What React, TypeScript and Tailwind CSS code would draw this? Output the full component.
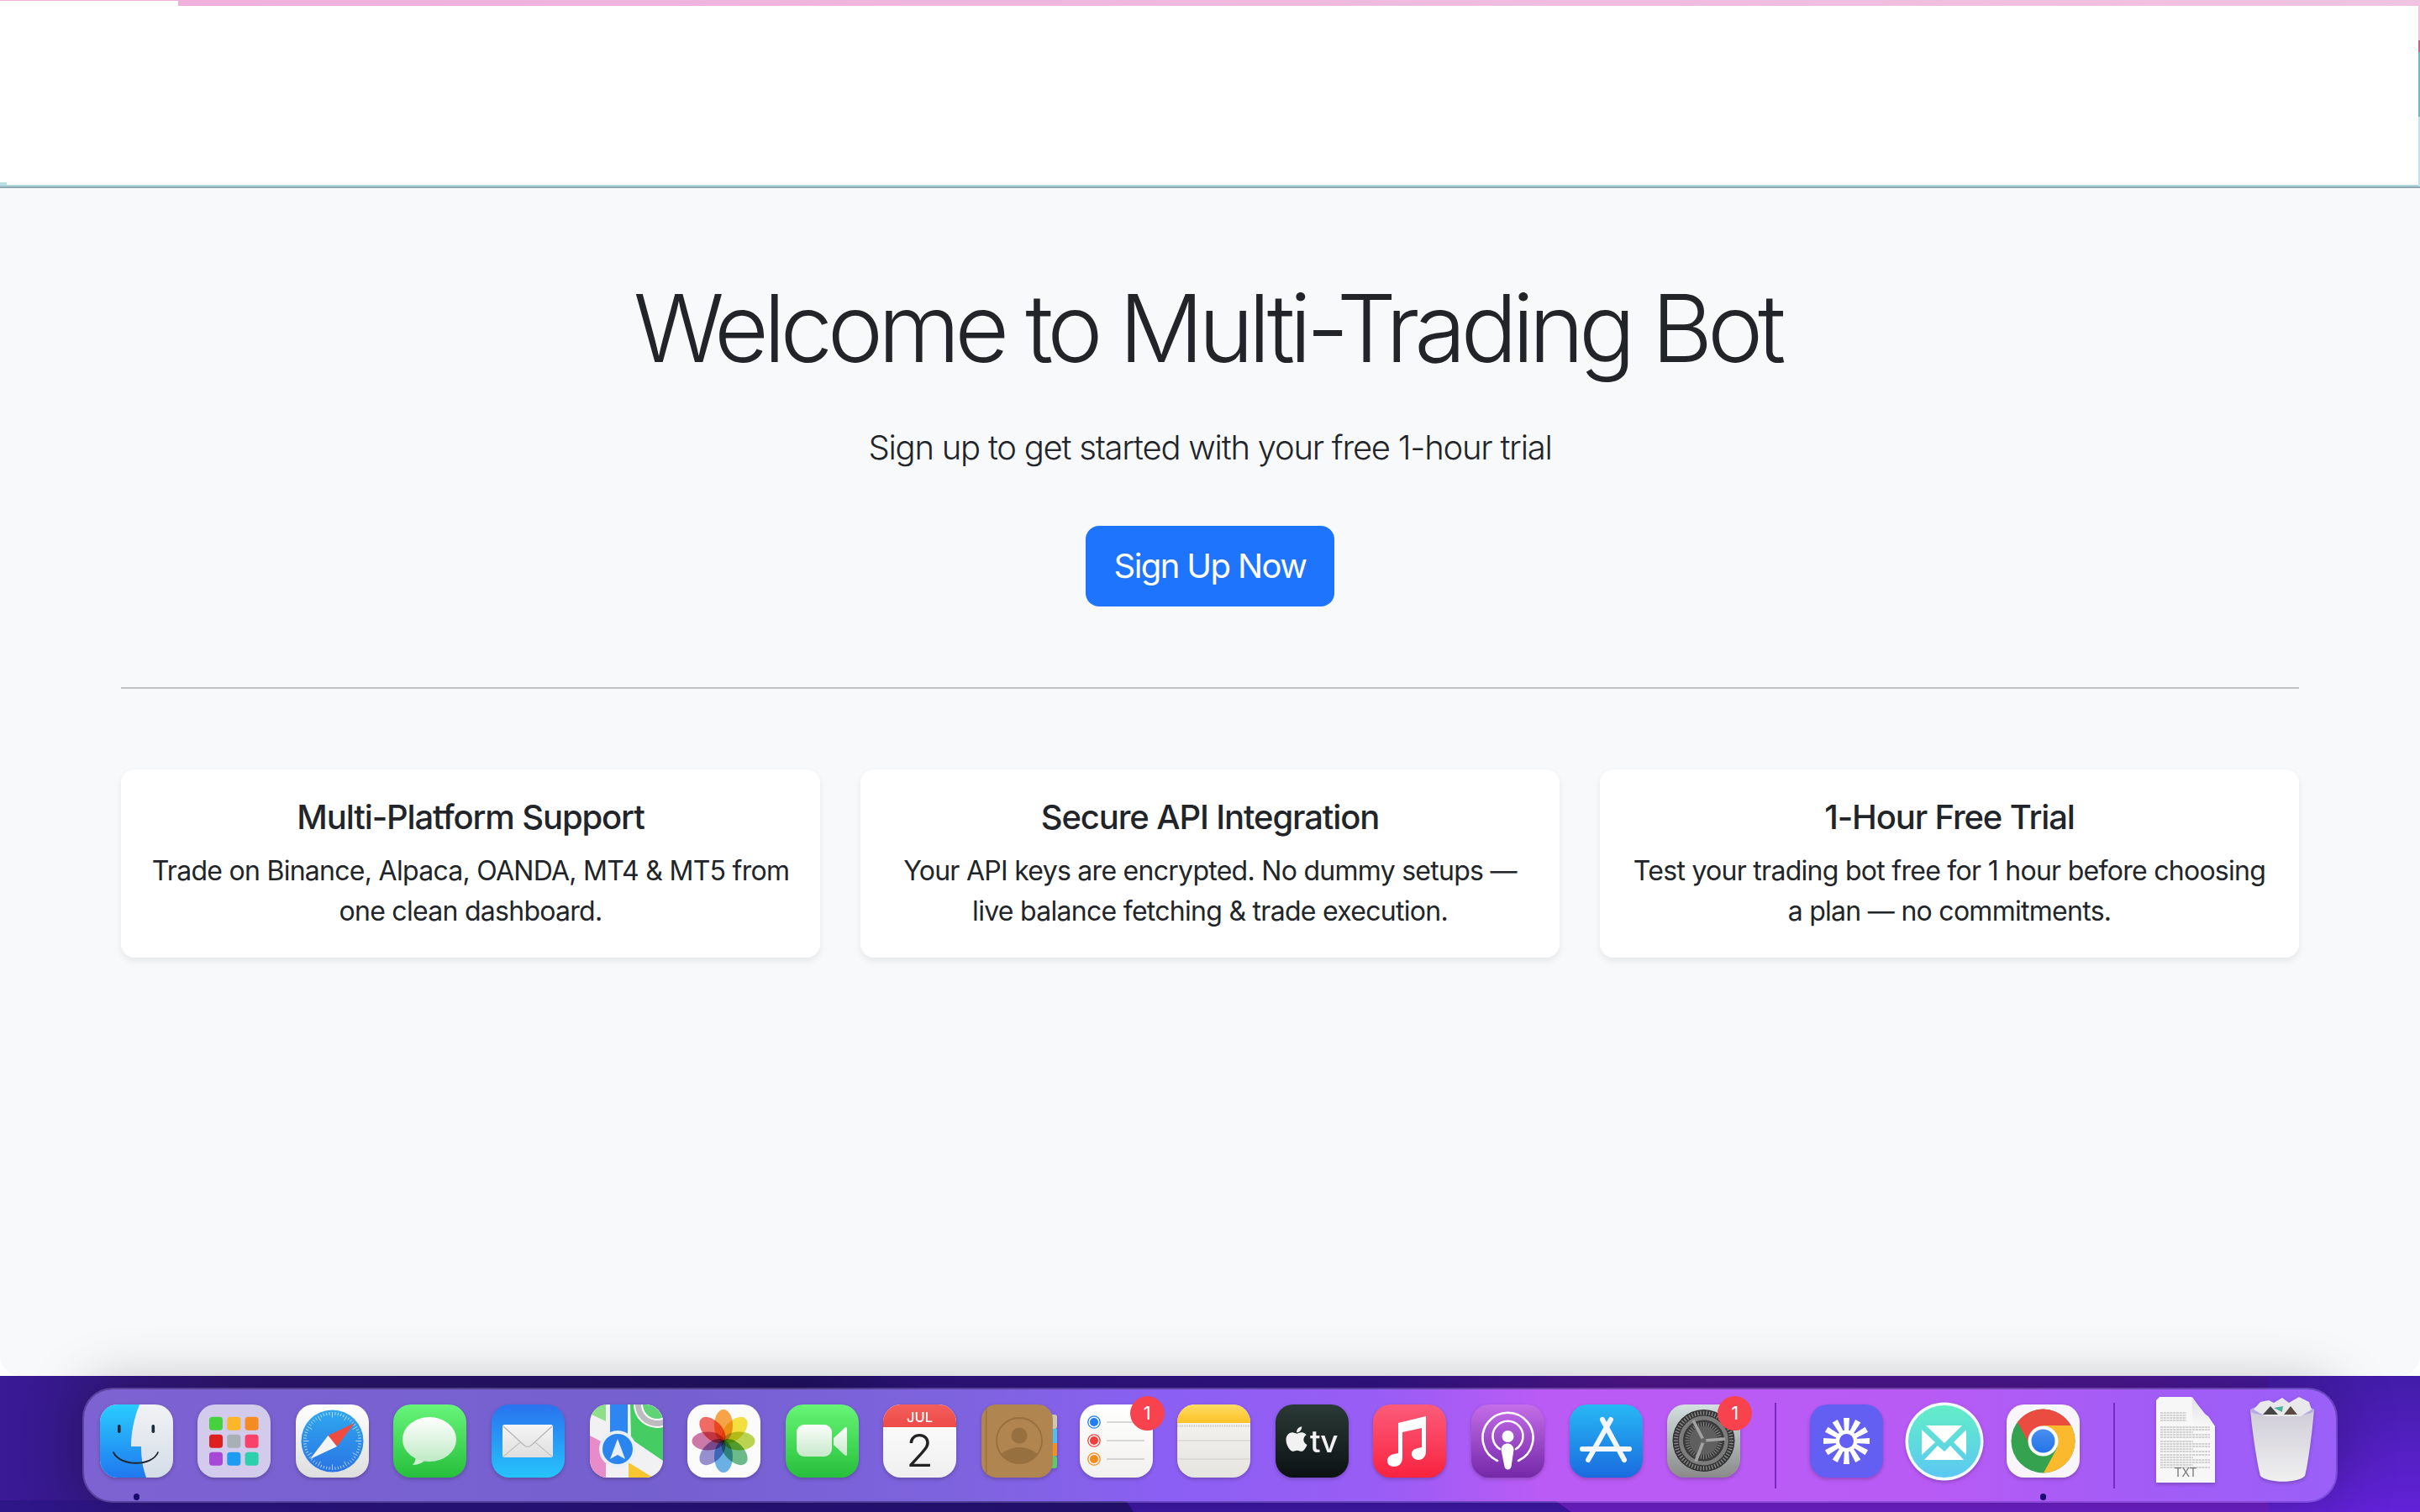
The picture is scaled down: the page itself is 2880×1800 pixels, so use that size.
import React from 'react';
import { FaApple } from 'react-icons/fa';

const features = [
  {
    title: 'Multi-Platform Support',
    text: 'Trade on Binance, Alpaca, OANDA, MT4 & MT5 from one clean dashboard.',
  },
  {
    title: 'Secure API Integration',
    text: 'Your API keys are encrypted. No dummy setups — live balance fetching & trade execution.',
  },
  {
    title: '1-Hour Free Trial',
    text: 'Test your trading bot free for 1 hour before choosing a plan — no commitments.',
  },
];

const iconShadow = 'block overflow-visible drop-shadow-[0_2px_2px_rgba(0,0,0,0.22)]';

function Tile({ id, children }: { id: string; children: React.ReactNode }) {
  return (
    <svg viewBox="0 0 87 87" className={`w-[87px] h-[87px] ${iconShadow}`}>
      <defs>
        <clipPath id={id}>
          <rect width="87" height="87" rx="21" />
        </clipPath>
      </defs>
      <g clipPath={`url(#${id})`}>{children}</g>
    </svg>
  );
}

function VGrad({ id, from, to }: { id: string; from: string; to: string }) {
  return (
    <defs>
      <linearGradient id={id} x1="0" y1="0" x2="0" y2="1">
        <stop offset="0" stopColor={from} />
        <stop offset="1" stopColor={to} />
      </linearGradient>
    </defs>
  );
}

function Finder() {
  return (
    <Tile id="finder">
      <VGrad id="finderL" from="#2accfe" to="#1f78ef" />
      <VGrad id="finderR" from="#f1f2f4" to="#d4dde8" />
      <rect width="87" height="87" fill="url(#finderR)" />
      <path d="M0 0H47C41 15 37 32 37 50H49C49 64 51 76 55 87H0Z" fill="url(#finderL)" />
      <rect x="21" y="24" width="3.6" height="10" rx="1.8" fill="#1c2a3a" />
      <rect x="61.5" y="24" width="3.6" height="10" rx="1.8" fill="#1c2a3a" />
      <path d="M16 57C24 74 62 74 69 57" fill="none" stroke="#20262c" strokeWidth="1.8" strokeLinecap="round" />
    </Tile>
  );
}

function Launchpad() {
  const cells = ['#46d23f', '#fbb728', '#f58b23', '#dd1f1f', '#a8b0b5', '#f8426a', '#a748d6', '#1e9cf2', '#2ed0ac'];
  return (
    <Tile id="launchpad">
      <rect width="87" height="87" fill="#d3cbec" />
      {cells.map((c, i) => (
        <rect key={i} x={14 + (i % 3) * 21.3} y={14.7 + Math.floor(i / 3) * 21} width="16" height="16" rx="3.5" fill={c} />
      ))}
    </Tile>
  );
}

function Safari() {
  const ticks = Array.from({ length: 60 }, (_, i) => (i * Math.PI) / 30);
  return (
    <Tile id="safari">
      <VGrad id="safariBg" from="#ffffff" to="#dedede" />
      <VGrad id="safariDial" from="#2fa8ef" to="#2a74e4" />
      <rect width="87" height="87" fill="url(#safariBg)" />
      <circle cx="43.5" cy="43.5" r="37" fill="url(#safariDial)" />
      {ticks.map((a, i) => (
        <line
          key={i}
          x1={43.5 + Math.cos(a) * 34.5}
          y1={43.5 + Math.sin(a) * 34.5}
          x2={43.5 + Math.cos(a) * (i % 5 === 0 ? 28 : 31)}
          y2={43.5 + Math.sin(a) * (i % 5 === 0 ? 28 : 31)}
          stroke="#d9ecfb"
          strokeWidth="0.8"
        />
      ))}
      <path d="M70 22L38.5 37L49 50Z" fill="#ef4b3e" />
      <path d="M17 65L38.5 37L49 50Z" fill="#f4f4f4" />
    </Tile>
  );
}

function Messages() {
  return (
    <Tile id="messages">
      <VGrad id="msgBg" from="#68f57a" to="#26bf3b" />
      <VGrad id="msgBubble" from="#ffffff" to="#bfeac5" />
      <rect width="87" height="87" fill="url(#msgBg)" />
      <path d="M27 60C27 65 26 69 23 72C30 72 36 69 39 65Z" fill="#cdf0d2" />
      <ellipse cx="43" cy="41.5" rx="32" ry="26.5" fill="url(#msgBubble)" />
    </Tile>
  );
}

function Mail() {
  return (
    <Tile id="mail">
      <VGrad id="mailBg" from="#2a72ee" to="#25c4fb" />
      <VGrad id="mailEnv" from="#f5f5f5" to="#dfdfdf" />
      <rect width="87" height="87" fill="url(#mailBg)" />
      <rect x="13" y="24" width="60" height="39" rx="2.5" fill="url(#mailEnv)" />
      <path d="M14 26L38 48C41 51 45 51 48 48L72 26" fill="none" stroke="#b8b8b8" strokeWidth="1.4" />
      <path d="M14 62L34 45M72 62L52 45" stroke="#c4c4c4" strokeWidth="1.2" />
    </Tile>
  );
}

function Maps() {
  return (
    <Tile id="maps">
      <rect width="87" height="87" fill="#f1f1f4" />
      <path d="M0 0H19V20L0 11Z" fill="#8ee088" />
      <path d="M48 0H87V67L49 41Z" fill="#45cc62" />
      <circle cx="80" cy="0" r="28" fill="#ffffff" />
      <circle cx="80" cy="0" r="26" fill="#bcbcc0" />
      <circle cx="80" cy="0" r="19" fill="#ffffff" />
      <circle cx="80" cy="0" r="17" fill="#5fd476" />
      <path d="M0 37L19 47V87H0Z" fill="#e78cc8" />
      <path d="M46 69L75 87H46Z" fill="#f8c62e" />
      <rect x="24" y="0" width="21" height="50" fill="#2e86f0" />
      <circle cx="33" cy="53" r="22" fill="#e9eff6" />
      <circle cx="33" cy="53" r="18" fill="#2a86ee" />
      <path d="M33 41L42 65L33 60L24 65Z" fill="#e9eff6" />
    </Tile>
  );
}

function Photos() {
  const petals = ['#f59a33', '#f3db2b', '#b3cf3e', '#5cb27c', '#5aa7e0', '#8b85c9', '#c86a9e', '#ee5b52'];
  return (
    <Tile id="photos">
      <rect width="87" height="87" fill="#fbfbfb" />
      <g style={{ isolation: 'isolate' }}>
        {petals.map((c, i) => (
          <ellipse
            key={i}
            cx="43"
            cy="25"
            rx="11"
            ry="19"
            fill={c}
            fillOpacity="0.9"
            transform={`rotate(${i * 45} 43 43.5)`}
            style={{ mixBlendMode: 'multiply' }}
          />
        ))}
      </g>
    </Tile>
  );
}

function FaceTime() {
  return (
    <Tile id="facetime">
      <VGrad id="ftBg" from="#67f576" to="#27bf3c" />
      <VGrad id="ftCam" from="#fbfdfb" to="#c6e9cb" />
      <rect width="87" height="87" fill="url(#ftBg)" />
      <rect x="13" y="24" width="42" height="38" rx="9" fill="url(#ftCam)" />
      <path d="M57 40L70 28C72 26 73 27 73 29V59C73 61 72 62 70 60L57 48Z" fill="url(#ftCam)" />
    </Tile>
  );
}

function Calendar() {
  return (
    <Tile id="calendar">
      <VGrad id="calBg" from="#ffffff" to="#efefef" />
      <VGrad id="calTop" from="#f35f5b" to="#ee4a47" />
      <rect width="87" height="87" fill="url(#calBg)" />
      <rect width="87" height="27" fill="url(#calTop)" />
      <text x="43.5" y="20.5" textAnchor="middle" fontFamily="Inter, sans-serif" fontSize="16.5" fontWeight="500" fill="#fff">
        JUL
      </text>
      <text x="43.5" y="74" textAnchor="middle" fontFamily="Inter, sans-serif" fontSize="54" fontWeight="300" fill="#222">
        2
      </text>
    </Tile>
  );
}

function Contacts() {
  return (
    <svg viewBox="0 0 87 87" className={`w-[87px] h-[87px] ${iconShadow}`}>
      <defs>
        <clipPath id="contactsRing">
          <circle cx="45" cy="43" r="27" />
        </clipPath>
      </defs>
      <rect x="78" y="12" width="12" height="17" rx="3" fill="#cfc7b0" />
      <rect x="78" y="29" width="12" height="17" fill="#4fc0ee" />
      <rect x="78" y="46" width="12" height="15" fill="#f18f24" />
      <rect x="78" y="61" width="12" height="15" rx="3" fill="#5cc96a" />
      <rect x="0" y="0" width="85" height="87" rx="18" fill="#b08550" />
      <rect x="5" y="3" width="1.4" height="81" fill="#96703f" />
      <circle cx="45" cy="43" r="27" fill="none" stroke="#96703f" strokeWidth="1.8" />
      <circle cx="45" cy="37" r="9.5" fill="#96703f" />
      <g clipPath="url(#contactsRing)">
        <ellipse cx="45" cy="66" rx="24" ry="15" fill="#96703f" />
      </g>
    </svg>
  );
}

function Reminders() {
  const rows = [
    ['#1f7cf2', 21],
    ['#f0403a', 43],
    ['#f08d1d', 65],
  ] as const;
  return (
    <Tile id="reminders">
      <VGrad id="remBg" from="#ffffff" to="#f2f1ef" />
      <rect width="87" height="87" fill="url(#remBg)" />
      {rows.map(([c, y]) => (
        <g key={y}>
          <circle cx="17" cy={y} r="7.2" fill="none" stroke={c} strokeWidth="1.3" />
          <circle cx="17" cy={y} r="5" fill={c} />
          <line x1="32" y1={y} x2="77" y2={y} stroke="#b5b5b5" strokeWidth="1.2" />
        </g>
      ))}
    </Tile>
  );
}

function Notes() {
  return (
    <Tile id="notes">
      <VGrad id="notesTop" from="#fddc64" to="#fcc125" />
      <VGrad id="notesBody" from="#f6f5f3" to="#e6e4df" />
      <rect width="87" height="87" fill="url(#notesBody)" />
      <rect width="87" height="22" fill="url(#notesTop)" />
      <line x1="0" y1="25.6" x2="87" y2="25.6" stroke="#c4c3bd" strokeWidth="2" strokeDasharray="1.4 1.4" />
      <line x1="0" y1="43" x2="87" y2="43" stroke="#d8d7d3" strokeWidth="1.6" />
      <line x1="0" y1="65" x2="87" y2="65" stroke="#d8d7d3" strokeWidth="1.6" />
    </Tile>
  );
}

function AppleTv() {
  return (
    <Tile id="tv">
      <VGrad id="tvBg" from="#2a3a36" to="#0c1113" />
      <rect width="87" height="87" fill="url(#tvBg)" />
      <FaApple x="8" y="24" size={34} color="#f2f2f2" />
      <text x="41" y="57" fontFamily="Inter, sans-serif" fontSize="37" fontWeight="500" fill="#f2f2f2" letterSpacing="-1">
        tv
      </text>
    </Tile>
  );
}

function Music() {
  return (
    <Tile id="music">
      <VGrad id="musicBg" from="#fb5c7a" to="#f9233f" />
      <rect width="87" height="87" fill="url(#musicBg)" />
      <path
        d="M30 22L63 14V56C63 62 59 66 54 66C50 66 46 63 46 59C46 55 49 53 53 52L58 51V28L35 33V63C35 70 31 74 25 74C20 74 17 71 17 67C17 63 20 60 25 59L30 58Z"
        fill="#fff"
      />
    </Tile>
  );
}

function Podcasts() {
  return (
    <Tile id="podcasts">
      <VGrad id="podBg" from="#c46de8" to="#7428a8" />
      <rect width="87" height="87" fill="url(#podBg)" />
      <g fill="none" stroke="#fff" strokeLinecap="round" strokeWidth="2.6">
        <path d="M31 67A30 30 0 1 1 56 67" />
        <path d="M34 53A18 18 0 1 1 53 53" />
      </g>
      <circle cx="43.5" cy="38" r="7" fill="#fff" />
      <path d="M35.5 54C35.5 44 50.5 44 50.5 54L47.5 74C46.8 78.5 40.2 78.5 39.5 74Z" fill="#fff" />
    </Tile>
  );
}

function AppStore() {
  return (
    <Tile id="appstore">
      <VGrad id="appBg" from="#27b8f4" to="#1a6bdf" />
      <rect width="87" height="87" fill="url(#appBg)" />
      <g stroke="#f4f8fd" strokeWidth="6" strokeLinecap="round" fill="none">
        <path d="M39 18L65 66" />
        <path d="M49 18L22 66" />
        <path d="M15 53H71" />
      </g>
    </Tile>
  );
}

function SystemPrefs() {
  const teeth = Array.from({ length: 60 }, (_, i) => i * 6);
  const inner = Array.from({ length: 40 }, (_, i) => i * 9);
  return (
    <Tile id="prefs">
      <VGrad id="prefBg" from="#d3dfe0" to="#8a8a8a" />
      <rect width="87" height="87" fill="url(#prefBg)" />
      <circle cx="43.5" cy="43" r="37" fill="#333" />
      {teeth.map((a) => (
        <rect key={a} x="42.8" y="7.5" width="1.4" height="5" fill="#8a8a8a" transform={`rotate(${a} 43.5 43)`} />
      ))}
      <circle cx="43.5" cy="43" r="27" fill="none" stroke="#7c7c7c" strokeWidth="5" />
      <circle cx="43.5" cy="43" r="24" fill="#3b3b3b" />
      {inner.map((a) => (
        <rect key={a} x="43" y="21" width="1" height="5" fill="#8a8a8a" transform={`rotate(${a} 43.5 43)`} />
      ))}
      <circle cx="43.5" cy="43" r="17" fill="#5f5f5f" />
      <g stroke="#a3a3a3" strokeWidth="3.6">
        <line x1="43.5" y1="43" x2="31" y2="19" />
        <line x1="43.5" y1="43" x2="69" y2="41" />
        <line x1="43.5" y1="43" x2="34" y2="68" />
      </g>
      <circle cx="43.5" cy="43" r="3" fill="#666" />
    </Tile>
  );
}

function Loom() {
  const rays = Array.from({ length: 12 }, (_, i) => i * 30);
  return (
    <Tile id="loom">
      <rect width="87" height="87" fill="#625ff2" />
      <g fill="#fff">
        {rays.map((a) => (
          <path key={a} d="M41 33L40 16H47L46 33Z" transform={`rotate(${a} 43.5 43.5)`} />
        ))}
      </g>
      <circle cx="43.5" cy="43.5" r="13" fill="#fff" />
      <circle cx="43.5" cy="43.5" r="8.5" fill="#625ff2" />
    </Tile>
  );
}

function Mailspring() {
  return (
    <svg viewBox="0 0 94 94" className={`w-[94px] h-[94px] -m-[3.5px] ${iconShadow}`}>
      <VGrad id="msBg" from="#62edc7" to="#5cc8f3" />
      <circle cx="47" cy="47" r="46.5" fill="#f4fbfb" />
      <circle cx="47" cy="47" r="43" fill="url(#msBg)" />
      <g fill="#fff">
        <path d="M25 28H68L47 49Z" />
        <path d="M20 33V63L36 48Z" />
        <path d="M73 33V63L58 48Z" />
        <path d="M23 69L39 52L47 59L54 52L70 69Z" />
      </g>
    </svg>
  );
}

function Chrome() {
  return (
    <Tile id="chrome">
      <VGrad id="chromeDot" from="#4b8ef0" to="#2374e8" />
      <rect width="87" height="87" fill="#f8f5fb" />
      <circle cx="43.5" cy="43.5" r="38" fill="#34a24f" />
      <path d="M43.5 25H76.7A38 38 0 0 0 13 21L30 52Z" fill="#ea4c3f" />
      <path d="M43.5 25H76.7A38 38 0 0 1 44 81.5L60 52Z" fill="#fbb92e" />
      <circle cx="43.5" cy="43.5" r="18" fill="#fff" />
      <circle cx="43.5" cy="43.5" r="14" fill="url(#chromeDot)" />
    </Tile>
  );
}

function TxtFile() {
  const lines = [10, 13, 16, 19, 27, 30, 33, 36, 39, 44, 47, 50, 53, 56, 60, 63, 66, 69, 72, 75];
  return (
    <svg viewBox="0 0 87 87" className={`w-[87px] h-[87px] ${iconShadow}`}>
      <VGrad id="txtFold" from="#e2e2e6" to="#fafafa" />
      <path d="M8 -5L12 -9H50L78 26V93H8Z" fill="#f7f7f7" />
      <path d="M51 -9C50 8 50 22 55 26C60 29 70 30 78 26L70 14L64 10Z" fill="url(#txtFold)" />
      {lines.map((y, i) => (
        <line
          key={y}
          x1="13"
          y1={y}
          x2={y < 27 ? 44 : i % 3 === 0 ? 52 : 72}
          y2={y}
          stroke="#8a8a8a"
          strokeWidth="0.7"
          strokeDasharray="3 0.8"
        />
      ))}
      <text x="43" y="86" textAnchor="middle" fontFamily="Inter, sans-serif" fontSize="14" fill="#777">
        TXT
      </text>
    </svg>
  );
}

function Trash() {
  return (
    <svg viewBox="0 0 87 87" className={`w-[87px] h-[87px] ${iconShadow}`}>
      <VGrad id="trashBg" from="#cfccd8" to="#f0f0f0" />
      <path d="M4 6C6 30 12 70 16 85C24 94 62 94 69 85C73 70 78 30 80 6Z" fill="url(#trashBg)" />
      <ellipse cx="42" cy="7" rx="38" ry="7" fill="#b7a9e4" />
      <path d="M8 6L16 -3L26 -5L32 -2L42 -8L50 -2L62 -9L74 -3L77 6L64 14H22Z" fill="#e9e9ec" />
      <path d="M19 12L28 2L37 12Z" fill="#454545" />
      <path d="M44 12L52 2L60 12Z" fill="#5a4a44" />
      <path d="M32 4L43 2L42 9Z" fill="#4bb39a" />
    </svg>
  );
}

function Badge() {
  return (
    <span className="absolute -top-[10px] -right-[14px] w-[41px] h-[41px] rounded-full bg-[#f8424e] flex items-center justify-center text-[22px] text-white">
      1
    </span>
  );
}

function DockItem({ children, badge, running }: { children: React.ReactNode; badge?: boolean; running?: boolean }) {
  return (
    <div className="relative w-[87px] h-[87px] shrink-0">
      {children}
      {badge && <Badge />}
      {running && <span className="absolute -bottom-[27px] left-[40px] w-[7px] h-[8px] rounded-full bg-[#1b0a6e]" />}
    </div>
  );
}

function DockDivider() {
  return <div className="w-[2px] h-[102px] -mt-[2px] mx-[11px] shrink-0 bg-[#7a28c0]" />;
}

function Wallpaper() {
  return (
    <svg viewBox="0 0 2880 162" preserveAspectRatio="none" className="absolute left-0 bottom-0 w-[2880px] h-[162px]">
      <defs>
        <linearGradient id="wallTop" x1="0" y1="0" x2="1" y2="0">
          <stop offset="0" stopColor="#3a1a96" />
          <stop offset="0.1" stopColor="#2e1672" />
          <stop offset="0.33" stopColor="#211264" />
          <stop offset="0.38" stopColor="#2f1480" />
          <stop offset="0.57" stopColor="#34148a" />
          <stop offset="0.68" stopColor="#521790" />
          <stop offset="0.88" stopColor="#4c1794" />
          <stop offset="1" stopColor="#421ca8" />
        </linearGradient>
        <linearGradient id="wallLow" x1="0" y1="0" x2="1" y2="0">
          <stop offset="0" stopColor="#2f1688" />
          <stop offset="1" stopColor="#261278" />
        </linearGradient>
        <linearGradient id="wallRight" x1="0" y1="0" x2="0" y2="1">
          <stop offset="0" stopColor="#421ca8" />
          <stop offset="1" stopColor="#6222d8" />
        </linearGradient>
      </defs>
      <rect width="2880" height="162" fill="url(#wallTop)" />
      <path d="M0 148H1340L1349 162H0Z" fill="url(#wallLow)" />
      <path d="M1340 148H1850L1870 162H1349Z" fill="#4018ac" />
      <path d="M1850 148H2880V162H1870Z" fill="#7020cc" />
      <rect x="2700" y="0" width="180" height="162" fill="url(#wallRight)" />
    </svg>
  );
}

export default function App() {
  return (
    <div className="relative w-[2880px] h-[1800px] overflow-hidden font-['Inter',sans-serif]">
      <Wallpaper />

      <div className="relative flex flex-col h-[1638px] rounded-b-[24px] overflow-hidden">
        <header className="relative shrink-0 h-[224px] bg-white border-b-[2px] border-b-[#8fa9b0]">
          <div className="flex h-[7px]">
            <div className="w-[212px] h-[1px] bg-[#efb0dc]" />
            <div className="flex-1 bg-gradient-to-r from-[#efb0dc] to-[#f0c3e2]" />
          </div>
          <div className="absolute left-0 right-0 bottom-0 h-[2px] bg-[#b0d8dc]" />
          <div className="absolute left-0 bottom-[2px] w-[8px] h-[3px] bg-[#b8e2e6]" />
          <div className="absolute right-0 top-[7px] bottom-0 w-[2px] flex flex-col">
            <div className="h-[41px] bg-[#f0c3e2]" />
            <div className="h-[14px] bg-[#c9608f]" />
            <div className="h-[77px] bg-[#6bbcc2]" />
            <div className="flex-1 bg-[#bfe3e6]" />
          </div>
        </header>

        <main className="flex-1 px-[144px] pt-[99px] bg-[#f8f9fa] text-[#212529]">
          <div className="text-center">
            <h1 className="pr-[7px] text-[112px] leading-[134px] font-light tracking-[-6.3px]">Welcome to Multi-Trading Bot</h1>
            <p className="mt-[46px] text-[40px] leading-[60px] font-light tracking-[-1.24px]">
              Sign up to get started with your free 1-hour trial
            </p>
            <button className="mt-[63px] w-[296px] h-[96px] rounded-[16px] bg-[#1e74fd] text-white text-[40px] tracking-[-1.6px]">
              Sign Up Now
            </button>
          </div>

          <hr className="mt-[96px] border-0 h-[2px] bg-[#c1c2c3]" />

          <div className="mt-[96px] grid grid-cols-3 gap-[48px]">
            {features.map((f) => (
              <div
                key={f.title}
                className="h-[224px] px-[32px] pt-[33px] bg-white rounded-[16px] shadow-[0_4px_8px_rgba(0,0,0,0.075)] text-center"
              >
                <h5 className="text-[40px] leading-[48px] font-medium tracking-[-1.13px]">{f.title}</h5>
                <p className="mt-[16px] text-[32px] leading-[48px] tracking-[-0.72px]">{f.text}</p>
              </div>
            ))}
          </div>
        </main>
      </div>

      <div className="relative mt-[14px] flex justify-center">
        <div className="flex h-[137px] pt-[18px] px-[19px] gap-[29.6px] rounded-[36px] border-[2px] border-[#ffffff30] bg-clip-padding shadow-[0_0_70px_rgba(0,0,0,0.28)] bg-[linear-gradient(to_right,#7d62d2_0%,#7560cf_25%,#7f63e0_40%,#8b5ff3_48%,#9a5df5_58%,#bb5bf5_65%,#b85bf5_82%,#a35cf6_91%,#9a60f8_100%)]">
          <DockItem running><Finder /></DockItem>
          <DockItem><Launchpad /></DockItem>
          <DockItem><Safari /></DockItem>
          <DockItem><Messages /></DockItem>
          <DockItem><Mail /></DockItem>
          <DockItem><Maps /></DockItem>
          <DockItem><Photos /></DockItem>
          <DockItem><FaceTime /></DockItem>
          <DockItem><Calendar /></DockItem>
          <DockItem><Contacts /></DockItem>
          <DockItem badge><Reminders /></DockItem>
          <DockItem><Notes /></DockItem>
          <DockItem><AppleTv /></DockItem>
          <DockItem><Music /></DockItem>
          <DockItem><Podcasts /></DockItem>
          <DockItem><AppStore /></DockItem>
          <DockItem badge><SystemPrefs /></DockItem>
          <DockDivider />
          <DockItem><Loom /></DockItem>
          <DockItem><Mailspring /></DockItem>
          <DockItem running><Chrome /></DockItem>
          <DockDivider />
          <DockItem><TxtFile /></DockItem>
          <DockItem><Trash /></DockItem>
        </div>
      </div>
    </div>
  );
}
